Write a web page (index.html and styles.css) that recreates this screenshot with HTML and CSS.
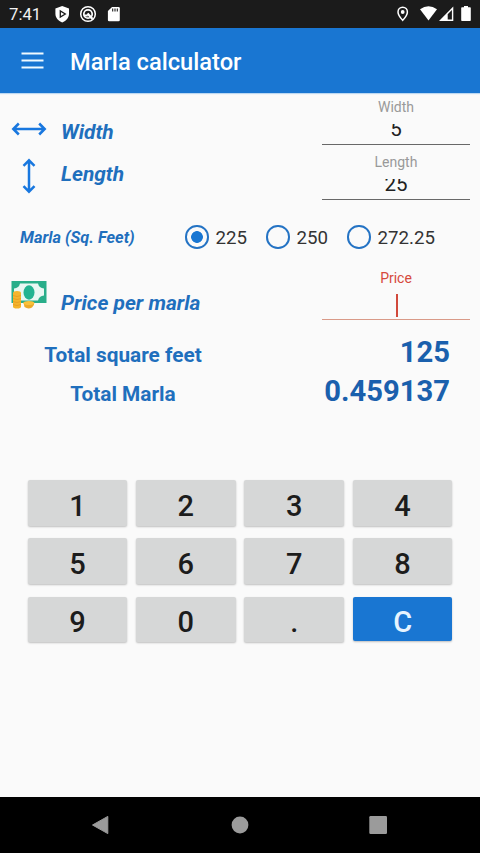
FILE: index.html
```html
<!DOCTYPE html>
<html lang="en">
<head>
<meta charset="utf-8">
<title>Marla calculator</title>
<link rel="stylesheet" href="styles.css">
</head>
<body>
<div class="statusbar">
  <span class="clock">7:41</span>
  <svg class="status-left" viewBox="0 0 68 28" width="68" height="28">
    <path fill="#fff" d="M8.2 6 15 8.5v5.2c0 4-2.7 7.2-6.8 8.7-4.1-1.5-6.8-4.7-6.8-8.7V8.5z"/>
    <path fill="none" stroke="#1b1b1b" stroke-width="1.3" d="M6.3 11v6l5-3z"/>
    <circle cx="34" cy="14" r="7.3" fill="none" stroke="#fff" stroke-width="1.5"/>
    <circle cx="34" cy="14" r="4.2" fill="none" stroke="#fff" stroke-width="1.7"/>
    <path d="M33.5 13.5 38.500 19" stroke="#fff" stroke-width="2.4"/>
    <path d="M29.800 15.500h4" stroke="#fff" stroke-width="2"/>
    <path fill="#fff" d="M58 7h6.5q1.3 0 1.3 1.3v11.6q0 1.3-1.3 1.3H55.2q-1.3 0-1.3-1.3V11z"/>
    <path stroke="#1b1b1b" stroke-width="1.1" d="M58.7 8.5v3M61 8.5v3M63.3 8.5v3"/>
  </svg>
  <svg class="status-right" viewBox="0 0 80 28" width="80" height="28">
    <path fill="none" stroke="#fff" stroke-width="1.5" d="M7.7 7.3c-2.7 0-4.7 2-4.7 4.6 0 3.300 4.700 8.400 4.700 8.400s4.700-5.100 4.700-8.400c0-2.600-2-4.600-4.700-4.600z"/>
    <circle cx="7.7" cy="12" r="1.9" fill="#fff"/>
    <path fill="#fff" d="M25 9.3Q33.5 3 42 9.3L33.5 20.5z"/>
    <path fill="#fff" fill-rule="evenodd" d="M44 21 58.3 6.5V21zM52.7 14.3v5.3h4.2V10z"/>
    <path fill="#fff" d="M69 6h4v1.2h2q.8 0 .8.8v12.200q0 .8-.8.8h-8q-.8 0-.8-.8V8q0-.8.8-.8h2z"/>
  </svg>
</div>
<header class="appbar">
  <svg viewBox="0 0 24 18" width="24" height="18"><path stroke="#f0faff" stroke-width="2" d="M1.500 1.500h22M1.500 8.500h22M1.500 15.500h22"/></svg>
  <h1>Marla calculator</h1>
</header>
<main>
  <section class="dimensions">
    <div class="labels">
      <div class="label-row">
        <svg class="arrow-h" viewBox="0 0 36 14" width="36" height="14"><path fill="none" stroke="#1877df" stroke-width="2.5" d="M2.5 7h31M7.800 1.500 2.300 7l5.500 5.500M28.200 1.500 33.700 7l-5.500 5.500"/></svg>
        <span>Width</span>
      </div>
      <div class="label-row">
        <svg class="arrow-v" viewBox="0 0 14 36" width="14" height="36"><path fill="none" stroke="#1877df" stroke-width="2.5" d="M7 2.500v31M1.500 7.800 7 2.300l5.500 5.500M1.500 28.200 7 33.700l5.500-5.500"/></svg>
        <span>Length</span>
      </div>
    </div>
    <div class="fields">
      <div class="field"><span class="hint">Width</span><div class="value"><span>5</span></div></div>
      <div class="field"><span class="hint">Length</span><div class="value"><span>25</span></div></div>
    </div>
  </section>
  <section class="marla">
    <span class="marla-label">Marla (Sq. Feet)</span>
    <div class="option"><span class="radio checked"></span><span>225</span></div>
    <div class="option"><span class="radio"></span><span>250</span></div>
    <div class="option"><span class="radio"></span><span>272.25</span></div>
  </section>
  <section class="price">
    <svg class="money" viewBox="0 0 36 30" width="36" height="30">
      <path fill="#29ae8a" d="M.5 1H35.500v22H.5z"/>
      <path fill="#e9f7f3" d="M9 3.500h18q1 4.500 6 5v7q-5 .5-6 5H9q-1-4.500-6-5v-7q5-.5 6-5z"/>
      <ellipse cx="18" cy="12.500" rx="5.500" ry="7.200" fill="#22b391"/>
      <path fill="#f5b52c" d="M2 13q0-2 4-2t4 2v13.500q0 2-4 2t-4-2z"/>
      <path fill="none" stroke="#e39a22" stroke-width=".8" d="M2 15.500q4 2 8 0M2 18.500q4 2 8 0M2 21.500q4 2 8 0M2 24.500q4 2 8 0"/>
      <path fill="#edaa29" d="M12.500 22.500h10.800q.2 3-2.300 5-4 2-7.500-.5z"/>
      <ellipse cx="17.800" cy="23" rx="5.500" ry="2" fill="#fac13b"/>
    </svg>
    <span class="price-label">Price per marla</span>
    <div class="price-field"><span class="hint">Price</span><span class="caret"></span></div>
  </section>
  <section class="totals">
    <div class="total"><span class="total-label">Total square feet</span><span class="total-value">125</span></div>
    <div class="total"><span class="total-label">Total Marla</span><span class="total-value">0.459137</span></div>
  </section>
  <section class="keypad">
    <button>1</button><button>2</button><button>3</button><button>4</button>
    <button>5</button><button>6</button><button>7</button><button>8</button>
    <button>9</button><button>0</button><button>.</button><button class="clear">C</button>
  </section>
</main>
<nav class="navbar">
  <svg viewBox="0 0 20 20" width="20" height="20"><path fill="#9b9b9b" stroke="#9b9b9b" stroke-linejoin="round" d="M2.500 10 17.800 1.400v17.200z"/></svg>
  <svg viewBox="0 0 20 20" width="20" height="20"><circle cx="11" cy="10" r="8.400" fill="#9b9b9b"/></svg>
  <svg viewBox="0 0 20 20" width="20" height="20"><rect x="1.300" y="1.100" width="17.700" height="17.800" rx="1.200" fill="#9b9b9b"/></svg>
</nav>
</body>
</html>
```
FILE: styles.css
```css
* { box-sizing: border-box; }
body {
  margin: 0;
  width: 480px;
  height: 853px;
  display: flex;
  flex-direction: column;
  overflow: hidden;
  background: #fafafa;
  color: #212121;
  font-family: Roboto, "Liberation Sans", sans-serif;
}
svg { display: block; flex: none; }

.statusbar {
  height: 28px;
  display: flex;
  background: #1b1b1b;
  color: #f2f2f2;
}
.clock { width: 54px; padding-left: 9px; font-size: 16.700px; line-height: 30px; }
.status-right { margin-left: auto; margin-right: 5px; }

.appbar {
  height: 65px;
  display: flex;
  align-items: center;
  padding-left: 20px;
  background: #1976d2;
  color: #fff;
  box-shadow: 0 1px 1px #bcd8f2;
}
h1 { margin: 3px 0 0 26px; font-size: 23.700px; font-weight: 500; line-height: 32px; }

main { flex: 1; }
.dimensions { display: flex; justify-content: space-between; height: 110px; padding-right: 10px; }
.labels { padding-top: 18px; }
.label-row {
  display: flex;
  align-items: center;
  height: 42px;
  padding-left: 11px;
  color: #1f6fbd;
  font-size: 20.900px;
  font-weight: 700;
  font-style: italic;
}
.arrow-h { margin: 0 14px 7px 0; }
.arrow-v { margin: 3px 25px 0 11px; }
.fields { width: 148px; }
.field { height: 55px; padding-top: 5px; text-align: center; }
.hint { display: block; height: 18px; color: #999; font-size: 14px; line-height: 18px; }
.value { height: 29px; padding-top: 8px; border-bottom: 1px solid #686868; }
.value span {
  display: block;
  height: 17px;
  overflow: hidden;
  font-size: 20.500px;
  line-height: 11px;
}

.marla { display: flex; height: 68px; align-items: center; padding-left: 20px; }
.marla-label { width: 165px; color: #1f6fbd; font-size: 16.400px; font-weight: 700; font-style: italic; }
.option { display: flex; align-items: center; gap: 7px; width: 81px; color: #333; font-size: 18.700px; line-height: 24px; }
.option span:last-child { padding-top: 1px; }
.radio { flex: none; width: 23.500px; height: 23.500px; border: 2px solid #2473c4; border-radius: 50%; }
.checked { background: radial-gradient(circle, #1976d2 5.500px, transparent 6.200px); }

.price { display: flex; height: 60px; padding: 0 10px 0 11px; }
.money { margin-top: 9px; }
.price-label { margin: 16px 0 0 14px; color: #1f6fbd; font-size: 20.900px; font-weight: 700; font-style: italic; line-height: 32px; }
.price-field { width: 148px; height: 49px; margin-left: auto; border-bottom: 1px solid #d99a88; }
.price-field .hint { color: #d6493c; text-align: center; transform: translateY(-2px); }
.caret { display: block; width: 2px; height: 23px; margin: 5px 0 0 74px; background: #d1493c; }

.totals { padding-top: 4px; }
.total { display: flex; height: 39px; align-items: center; justify-content: space-between; padding-right: 30px; }
.total-label { width: 246px; padding-top: 1px; color: #1f6fbd; font-size: 20.800px; font-weight: 700; text-align: center; }
.total-value { margin-bottom: 5px; color: #1a60ad; font-size: 29.200px; font-weight: 700; line-height: 34px; }

.keypad {
  display: grid;
  grid-template-columns: repeat(4, 99.500px);
  grid-auto-rows: 45.500px;
  gap: 12.800px 8.900px;
  padding: 67px 0 0 27.700px;
}
button {
  padding: 6px 0 0;
  border: 0;
  border-radius: 2px;
  background: #d6d7d7;
  color: #1c1c1c;
  font: 500 29px/36px Roboto, "Liberation Sans", sans-serif;
  box-shadow: 0 1px 2px rgba(0, 0, 0, .24);
}
.clear { height: 44.500px; padding-top: 7px; background: #1976d2; color: #e6f4ff; }

.navbar {
  height: 56px;
  display: flex;
  align-items: center;
  justify-content: space-between;
  padding: 0 92px 0 90px;
  background: #000;
}
```
